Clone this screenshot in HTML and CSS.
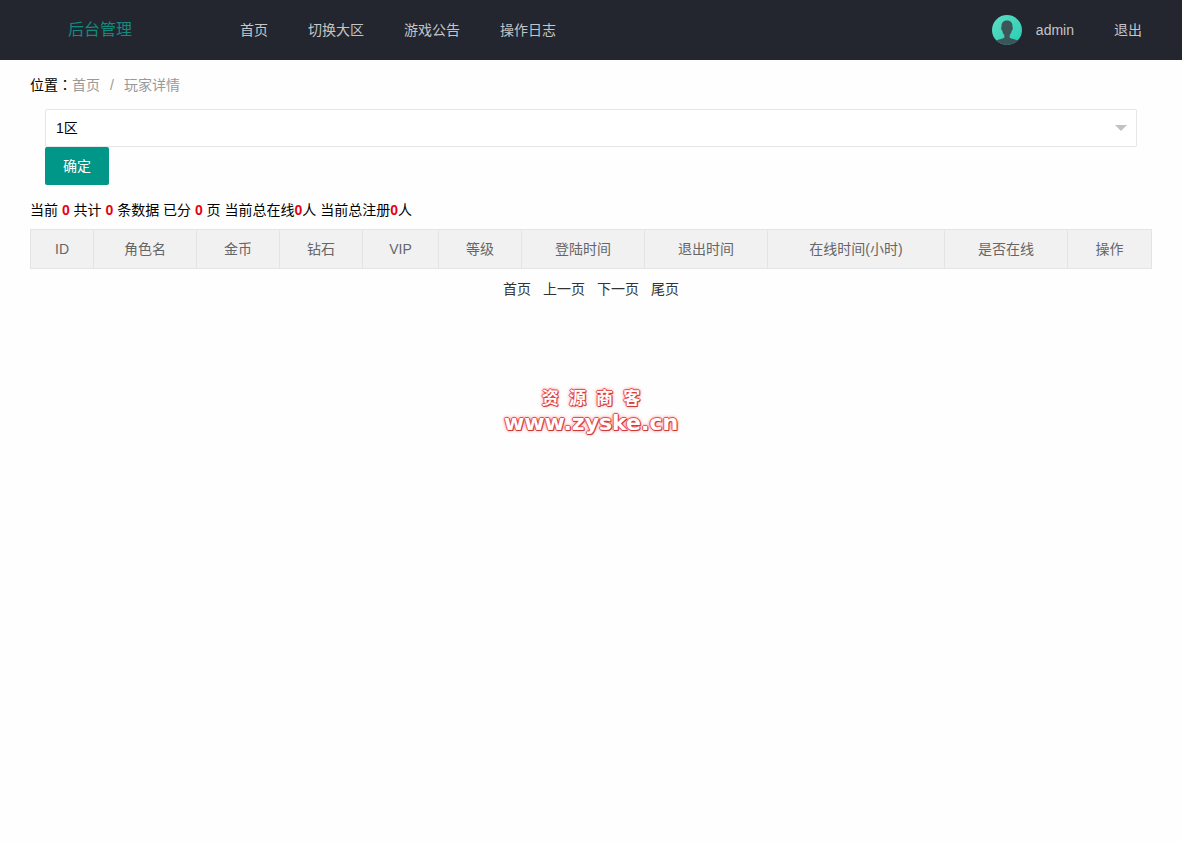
FILE: index.html
```html
<!DOCTYPE html>
<html lang="zh-CN">
<head>
<meta charset="utf-8">
<title>后台管理</title>
<link rel="stylesheet" href="styles.css">
</head>
<body>
<header class="header">
  <div class="logo">后台管理</div>
  <nav class="nav">
    <a href="#">首页</a>
    <a href="#">切换大区</a>
    <a href="#">游戏公告</a>
    <a href="#">操作日志</a>
  </nav>
  <div class="nav user-nav">
    <a href="#" class="user">
      <svg class="avatar" viewBox="0 0 30 30" aria-hidden="true">
        <defs>
          <linearGradient id="avatar-bg" x1="0" y1="0" x2="1" y2="1">
            <stop offset="0" stop-color="#5fdcc4"/>
            <stop offset="1" stop-color="#25cdb2"/>
          </linearGradient>
          <clipPath id="avatar-clip"><circle cx="15" cy="15" r="15"/></clipPath>
        </defs>
        <g clip-path="url(#avatar-clip)">
          <rect width="30" height="30" fill="url(#avatar-bg)"/>
          <path d="M15 5.500c-4 0-5.800 2.700-5.500 6.800-.7.400-.3 2.700.7 3.200.4 2 1 3.400 2.100 4.400v2.600c-1 1.500-6.300 1.800-9.300 3.500V31h24v-5c-3-1.700-8.300-2-9.300-3.500v-2.600c1.100-1 1.700-2.400 2.100-4.400 1-.5 1.400-2.800.7-3.200C20.800 8.200 19 5.500 15 5.500z" fill="#3c5558"/>
        </g>
      </svg>
      <span>admin</span>
    </a>
    <a href="#">退出</a>
  </div>
</header>
<main class="main">
  <nav class="breadcrumb" aria-label="位置">
    <span class="place" lang="zh-TW">位置：</span><a href="#">首页</a><span class="slash">/</span><a href="#">玩家详情</a>
  </nav>
  <form class="zone-form">
    <div class="select-box">
      <select aria-label="大区"><option>1区</option></select>
    </div>
    <button type="button" class="submit">确定</button>
  </form>
  <p class="stats">当前 <b>0</b> 共计 <b>0</b> 条数据 已分 <b>0</b> 页 当前总在线<b>0</b>人 当前总注册<b>0</b>人</p>
  <table class="players">
    <colgroup>
      <col class="c-id"><col class="c-name"><col class="c-short"><col class="c-short"><col class="c-vip"><col class="c-short"><col class="c-time"><col class="c-time"><col class="c-hours"><col class="c-time"><col class="c-last">
    </colgroup>
    <thead>
      <tr><th>ID</th><th>角色名</th><th>金币</th><th>钻石</th><th>VIP</th><th>等级</th><th>登陆时间</th><th>退出时间</th><th>在线时间(小时)</th><th>是否在线</th><th>操作</th></tr>
    </thead>
  </table>
  <nav class="pages" aria-label="分页">
    <a href="#">首页</a><a href="#">上一页</a><a href="#">下一页</a><a href="#">尾页</a>
  </nav>
</main>
<div class="watermark">
  <div class="mark-name">资 源 商 客</div>
  <div class="mark-url">www.zyske.cn</div>
</div>
</body>
</html>
```
FILE: styles.css
```css
* { box-sizing: border-box; }

body {
  margin: 0;
  background: #fefefe;
  color: #000;
  font: 14px/24px "Liberation Sans", "Noto Sans CJK SC", sans-serif;
}

a { color: inherit; text-decoration: none; }

.header {
  display: flex;
  height: 60px;
  line-height: 60px;
  background: #23262e;
}

.logo {
  width: 200px;
  margin-right: 20px;
  color: #148a7e;
  font-size: 16px;
  text-align: center;
}

.nav { display: flex; color: #c4c5c8; }
.nav a { padding: 0 20px; }

.user-nav { margin-left: auto; padding-right: 20px; }
.user { display: flex; align-items: center; gap: 14px; }
.avatar { width: 30px; height: 30px; }

.main { padding: 13px 30px 0; }

.breadcrumb { display: flex; color: #999; }
.place { color: #000; font-family: "Liberation Sans", "Noto Sans CJK TC", sans-serif; }
.slash { margin: 0 10px; }

.zone-form { padding: 12px 15px 0; }

.select-box { position: relative; }
.select-box::after {
  content: "";
  position: absolute;
  top: 16px;
  right: 10px;
  border: 6px solid transparent;
  border-top-color: #c2c2c2;
  border-bottom-width: 0;
  pointer-events: none;
}

select {
  display: block;
  width: 100%;
  height: 38px;
  padding: 0 10px;
  border: 1px solid #e6e6e9;
  border-radius: 2px;
  background: #fff;
  color: #000;
  font: inherit;
  appearance: none;
}

.submit {
  display: block;
  height: 38px;
  padding: 0 18px;
  border: 0;
  border-radius: 2px;
  background: #009688;
  color: #fff;
  font: inherit;
}

.stats { margin: 13px 0 7px; }
.stats b { color: #e60012; }

.players {
  width: 100%;
  table-layout: fixed;
  border-collapse: collapse;
  background: #f2f1f2;
  color: #666;
}
.players th {
  height: 39px;
  padding: 0;
  border: 1px solid #e4e4e6;
  font-weight: 400;
}
.c-id { width: 63px; }
.c-name { width: 103px; }
.c-short { width: 83px; }
.c-vip { width: 76px; }
.c-time { width: 123px; }
.c-hours { width: 177px; }
.c-last { width: 84px; }

.pages {
  display: flex;
  justify-content: center;
  gap: 12px;
  margin-top: 8px;
  color: #333;
}

.watermark {
  position: absolute;
  top: 388px;
  left: 0;
  right: 0;
  color: #fff;
  text-align: center;
  text-shadow: 1px 0 #dd4444, -1px 0 #e85050, 0 1px #cc3a3a, 0 -1px #e85050, 1px 1px #bb3a3a, 0 0 3px #ff5a5a, 0 0 4px #ff8080;
  pointer-events: none;
}
.mark-name {
  font: 700 18px/24px "Liberation Mono", "Noto Sans CJK SC", monospace;
  font-size: 17px;
}
.mark-url {
  font: 700 22px/22px "DejaVu Sans", sans-serif;
}
```
